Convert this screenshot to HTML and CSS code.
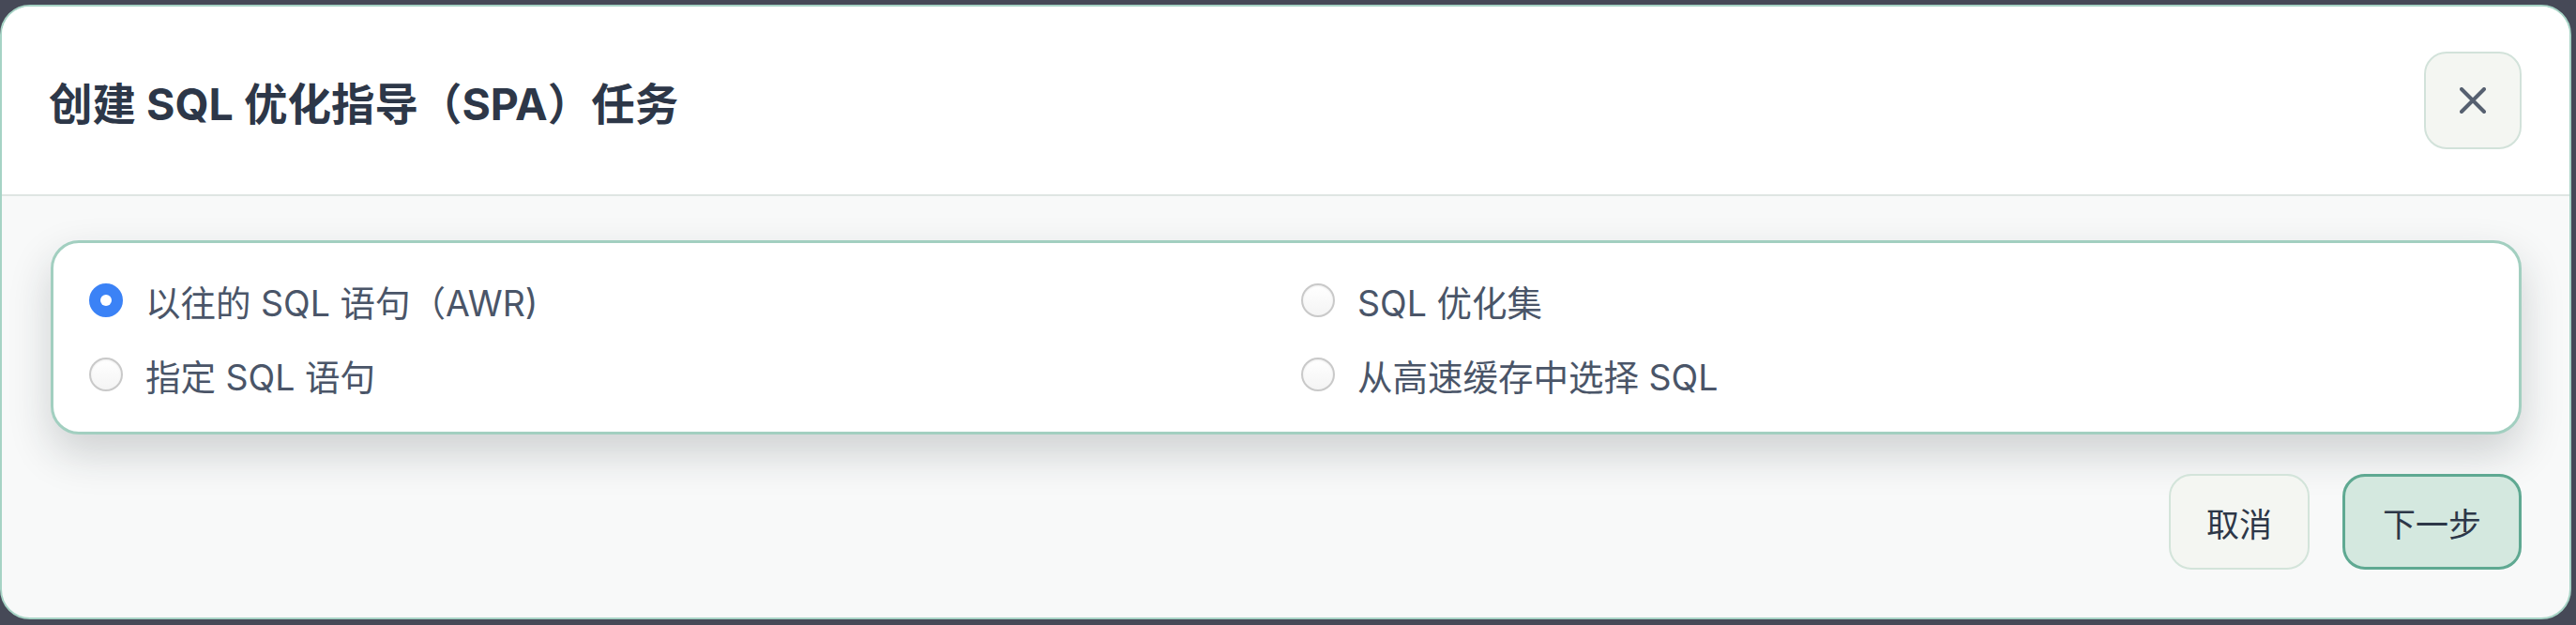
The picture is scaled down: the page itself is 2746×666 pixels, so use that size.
FILE: index.html
```html
<!DOCTYPE html>
<html lang="zh-CN">
<head>
<meta charset="utf-8">
<title>创建 SQL 优化指导（SPA）任务</title>
<link rel="stylesheet" href="styles.css">
</head>
<body>
<div class="modal">
  <header class="modal-header">
    <h1 class="modal-title">创建 SQL 优化指导（SPA）任务</h1>
    <button class="close-btn" aria-label="关闭">
      <svg class="close-icon" viewBox="0 0 28 28" width="28" height="28">
        <path d="M2 2 L26 26 M26 2 L2 26" stroke="#566070" stroke-width="4" stroke-linecap="round" fill="none"/>
      </svg>
    </button>
  </header>
  <main class="modal-body">
    <div class="option-card">
      <label class="option">
        <span class="radio radio-checked"><span class="radio-dot"></span></span>
        <span class="option-label">以往的 SQL 语句（AWR)</span>
      </label>
      <label class="option">
        <span class="radio"></span>
        <span class="option-label">SQL 优化集</span>
      </label>
      <label class="option">
        <span class="radio"></span>
        <span class="option-label">指定 SQL 语句</span>
      </label>
      <label class="option">
        <span class="radio"></span>
        <span class="option-label">从高速缓存中选择 SQL</span>
      </label>
    </div>
    <div class="modal-footer">
      <button class="btn btn-cancel">取消</button>
      <button class="btn btn-primary">下一步</button>
    </div>
  </main>
</div>
</body>
</html>
```

FILE: styles.css
```css
* {
  box-sizing: border-box;
}

html, body {
  margin: 0;
  height: 666px;
  overflow: hidden;
}

body {
  background: #464957;
  padding: 5px 5px 6px 0;
  font-family: "Inter", "Noto Sans CJK SC", sans-serif;
}

.modal {
  height: 655px;
  border: 2px solid #a6d3c5;
  border-radius: 32px;
  overflow: hidden;
  display: flex;
  flex-direction: column;
  background: #f8f9f9;
}

.modal-header {
  height: 202px;
  flex: none;
  background: #ffffff;
  border-bottom: 2px solid #dfe5e3;
  display: flex;
  align-items: center;
  justify-content: space-between;
  padding: 0 51px 0 50px;
}

.modal-title {
  margin: 0;
  font-size: 46.5px;
  font-weight: 700;
  color: #2d3748;
  letter-spacing: 0;
}

.close-btn {
  width: 104px;
  height: 104px;
  border-radius: 24px;
  border: 2px solid #d2e2da;
  background: #f4f6f2;
  display: flex;
  align-items: center;
  justify-content: center;
  padding: 0;
  cursor: pointer;
}

.close-icon {
  display: block;
}

.modal-body {
  flex: 1;
  padding: 47px 51px 0 52px;
  display: flex;
  flex-direction: column;
}

.option-card {
  background: #ffffff;
  border: 3px solid #a2cfc0;
  border-radius: 30px;
  padding: 36px 38px;
  display: grid;
  grid-template-columns: 1fr 1fr;
  column-gap: 32px;
  row-gap: 29px;
  box-shadow: 0 20px 46px rgba(25, 35, 45, 0.19);
}

.option {
  display: flex;
  align-items: center;
  height: 50px;
  gap: 24px;
}

.radio {
  width: 36px;
  height: 36px;
  flex: none;
  border-radius: 50%;
  background: linear-gradient(#ffffff, #f4f4f4);
  border: 2px solid #c9c9c9;
  box-shadow: inset 0 1px 2px rgba(0, 0, 0, 0.07);
  display: flex;
  align-items: center;
  justify-content: center;
}

.radio-checked {
  background: #3b82f6;
  border-color: #3b82f6;
  box-shadow: none;
}

.radio-dot {
  width: 12px;
  height: 12px;
  border-radius: 50%;
  background: #ffffff;
}

.option-label {
  font-size: 37.5px;
  color: #4a5568;
  white-space: nowrap;
}

.modal-footer {
  margin-top: 42px;
  display: flex;
  justify-content: flex-end;
  gap: 35px;
}

.btn {
  height: 102px;
  padding: 0 40px;
  border-radius: 24px;
  font-family: "Inter", "Noto Sans CJK SC", sans-serif;
  font-size: 35px;
  color: #2d3748;
  cursor: pointer;
}

.btn-cancel {
  padding: 0 38px;
  background: #f4f6f2;
  border: 2px solid #d3e4da;
}

.btn-primary {
  background: #d4e8df;
  border: 3px solid #5fa992;
}
```
